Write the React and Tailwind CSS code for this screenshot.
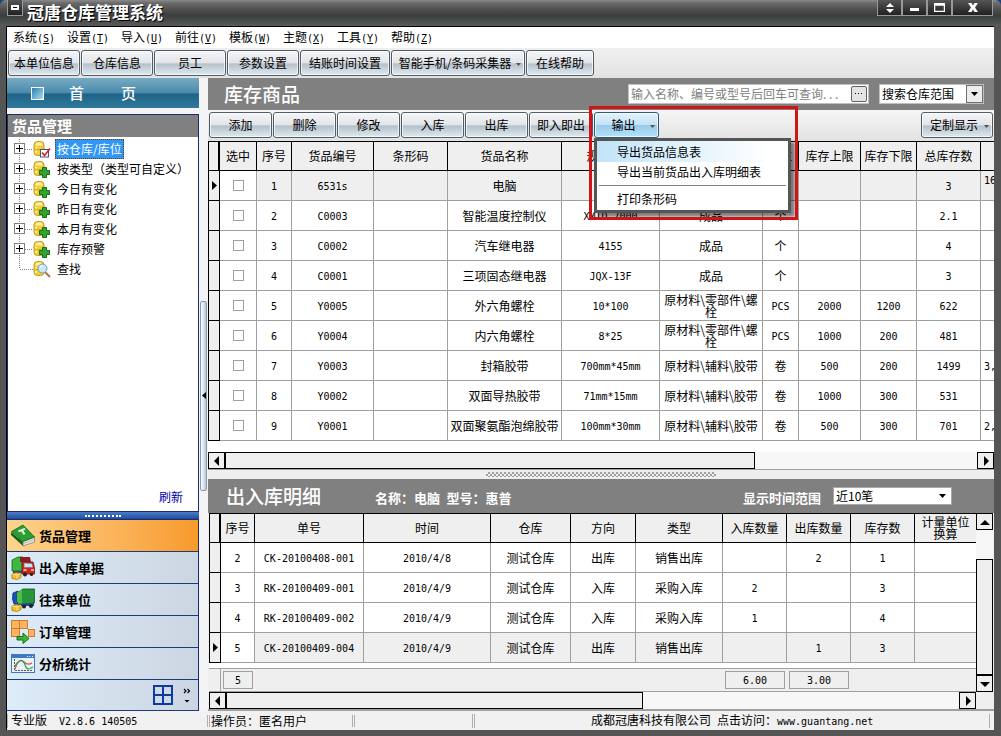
import React, { useState } from 'react';
import clsx from 'clsx';

const MENUS = [
  ['系统', 'S'], ['设置', 'T'], ['导入', 'U'], ['前往', 'V'],
  ['模板', 'W'], ['主题', 'X'], ['工具', 'Y'], ['帮助', 'Z'],
];

const TOOLS = [
  { label: '本单位信息', width: 'w-[72px]' },
  { label: '仓库信息', width: 'w-[72px]' },
  { label: '员工', width: 'w-[72px]' },
  { label: '参数设置', width: 'w-[72px]' },
  { label: '结账时间设置', width: 'w-[90px]' },
  { label: '智能手机/条码采集器', width: 'w-[134px]', caret: true },
  { label: '在线帮助', width: 'w-[68px]' },
];

const TREE = [
  { label: '按仓库/库位', badge: 'check', selected: true },
  { label: '按类型（类型可自定义）', badge: 'plus' },
  { label: '今日有变化', badge: 'plus' },
  { label: '昨日有变化', badge: 'plus' },
  { label: '本月有变化', badge: 'plus' },
  { label: '库存预警', badge: 'plus' },
  { label: '查找', badge: 'search', leaf: true },
];

const GOODS_COLS = [12, 37, 35, 82, 74, 114, 98, 103, 36, 62, 56, 64, 60];
const GOODS_HEAD = ['选中', '序号', '货品编号', '条形码', '货品名称', '规格型号', '类别', '单位', '库存上限', '库存下限', '总库存数', ''];
const GOODS = [
  ['6531s', '', '电脑', '惠普', '成品', '台', '', '', '3', '16'],
  ['C0003', '', '智能温度控制仪', 'XMTD-7000', '成品', '个', '', '', '2.1', ''],
  ['C0002', '', '汽车继电器', '4155', '成品', '个', '', '', '4', ''],
  ['C0001', '', '三项固态继电器', 'JQX-13F', '成品', '个', '', '', '3', ''],
  ['Y0005', '', '外六角螺栓', '10*100', '原材料\\零部件\\螺栓', 'PCS', '2000', '1200', '622', ''],
  ['Y0004', '', '内六角螺栓', '8*25', '原材料\\零部件\\螺栓', 'PCS', '1000', '200', '481', ''],
  ['Y0003', '', '封箱胶带', '700mm*45mm', '原材料\\辅料\\胶带', '卷', '500', '200', '1499', '3,'],
  ['Y0002', '', '双面导热胶带', '71mm*15mm', '原材料\\辅料\\胶带', '卷', '1000', '300', '531', ''],
  ['Y0001', '', '双面聚氨酯泡绵胶带', '100mm*30mm', '原材料\\辅料\\胶带', '卷', '500', '300', '701', '2,'],
];

const LOG_COLS = [12, 34, 109, 127, 80, 65, 87, 64, 64, 64, 62];
const LOG_HEAD = ['序号', '单号', '时间', '仓库', '方向', '类型', '入库数量', '出库数量', '库存数', '计量单位换算'];
const LOGS = [
  ['2', 'CK-20100408-001', '2010/4/8', '测试仓库', '出库', '销售出库', '', '2', '1', ''],
  ['3', 'RK-20100409-001', '2010/4/9', '测试仓库', '入库', '采购入库', '2', '', '3', ''],
  ['4', 'RK-20100409-002', '2010/4/9', '测试仓库', '入库', '采购入库', '1', '', '4', ''],
  ['5', 'CK-20100409-004', '2010/4/9', '测试仓库', '出库', '销售出库', '', '1', '3', ''],
];

function Latin({ children }) {
  return <span className="font-['DejaVu_Sans_Mono',monospace] text-[10px]">{children}</span>;
}

// plain ASCII values use the narrow monospaced face
function Value({ children }) {
  return /^[\x20-\x7e]+$/.test(children) ? <Latin>{children}</Latin> : children;
}

function Caret({ className }) {
  return (
    <svg viewBox="0 0 5 3" className={clsx('h-[3px] w-[5px] shrink-0', className)}>
      <path d="M0 0h5L2.5 3z" fill="currentColor" />
    </svg>
  );
}

function PushButton({ label, width, caret, active, onClick }) {
  return (
    <button
      onClick={onClick}
      className={clsx(
        'relative flex h-[26px] shrink-0 items-center justify-center rounded-[3px] border whitespace-nowrap shadow-[inset_0_0_0_1px_rgba(255,255,255,0.7)]',
        width,
        caret && 'pr-[6px]',
        active
          ? 'border-[#2c5a7c] bg-[linear-gradient(#e4f3fb_0%,#c4e2f4_48%,#98ccec_52%,#b4e2f8_100%)]'
          : 'border-[#505c66] bg-[linear-gradient(#f4f5f7_0%,#e2e5e9_48%,#b6c0ca_54%,#dfeaf0_100%)]'
      )}
    >
      {label}
      {caret && <Caret className="absolute right-[3px] top-[12px] text-[#555]" />}
    </button>
  );
}

function Arrow({ dir, className }) {
  const d = {
    left: 'M8 1v10L3 6z',
    right: 'M4 1v10l5-5z',
    up: 'M1 9h10L6 4z',
    down: 'M1 4h10L6 9z',
  }[dir];
  return (
    <button aria-label={dir} className={clsx('flex size-[17px] shrink-0 items-center justify-center border border-black bg-[#efefef]', className)}>
      <svg viewBox="0 0 12 12" className="size-3"><path d={d} /></svg>
    </button>
  );
}

function Expander({ leaf }) {
  return (
    <svg width="25" height="20" viewBox="0 0 25 20" fill="none" shapeRendering="crispEdges">
      <path d={leaf ? 'M11.5 0v10H25' : 'M11.5 0v20M17 10.5h8'} stroke="#808080" strokeDasharray="1 1" />
      {!leaf && <rect x="6.5" y="4.5" width="10" height="10" fill="#fff" stroke="#808080" />}
      {!leaf && <path d="M8 9.5h7M11.5 6v7" stroke="#000" />}
    </svg>
  );
}

function StockIcon({ badge }) {
  return (
    <svg width="18" height="18" viewBox="0 0 18 18">
      <rect x="1" y="1.5" width="10" height="14" rx="3.5" fill="#f3ce36" stroke="#c79a18" />
      <path d="M2.5 4.5c0-3 7-3 7 0v1h-7z" fill="#fdf0a0" />
      <path d="M3 7v2M3 11v2" stroke="#fff3ac" strokeWidth="2" />
      <path d="M1.5 8.5c2 1.600 7 1.600 9 0" stroke="#c79a18" fill="none" strokeWidth=".8" />
      {badge === 'plus' && (
        <path d="M9.5 7.5h4v3h3v4h-3v3h-4v-3h-3v-4h3z" fill="#2fa52c" stroke="#137018" />
      )}
      {badge === 'check' && (
        <g>
          <rect x="7.5" y="9.5" width="8" height="7.5" fill="#fff" stroke="#46508c" />
          <path d="M9 12.5l2.5 3L17 8.500" fill="none" stroke="#d42020" strokeWidth="1.600" />
        </g>
      )}
      {badge === 'search' && (
        <g>
          <path d="M12 12l5 5" stroke="#b0704a" strokeWidth="2" />
          <circle cx="9.5" cy="8.5" r="4.5" fill="#c4e8fa" stroke="#7a9cb8" />
          <path d="M7 8a3 3 0 0 1 3-2.5" stroke="#fff" fill="none" />
        </g>
      )}
    </svg>
  );
}

function Boxes() {
  return (
    <g>
      <path d="M1 18l4-1.500 5 1v4L6 23.500l-5-1z" fill="#f5bd2c" stroke="#a87808" strokeWidth=".8" />
      <path d="M1 18l5 1 4-1.500M6 19v4" fill="none" stroke="#fbe696" strokeWidth=".9" />
    </g>
  );
}

const NAV_ICONS = {
  book: (
    <svg viewBox="0 0 24 24" className="size-6">
      <path d="M0 8v3l12 11v-4z" fill="#12601c" />
      <path d="M12 17.500L23.500 13v5L12 22z" fill="#e8e8e0" stroke="#777" strokeWidth=".7" />
      <path d="M12.500 19.500l10.500-4" stroke="#999" strokeWidth=".6" />
      <path d="M.5 7.500L12 1l11.500 12L12 17.500z" fill="#28a034" stroke="#0e6a1a" strokeWidth=".8" />
      <path d="M7 6.500L13.500 4l1 1.500-2.300.9 2.300 3.600-2 .8-2.300-3.600-2.300 1z" fill="#eefbe8" />
    </svg>
  ),
  truckIn: (
    <svg viewBox="0 0 24 24" className="size-6">
      <path d="M1 4l6-3h5v14H1z" fill="#3cb83c" stroke="#156418" strokeWidth=".8" />
      <path d="M9 1h10l1 5H9z" fill="#8a2020" />
      <path d="M11 5.500l11 .5 1.500 6v6H11z" fill="#d22424" stroke="#701010" strokeWidth=".8" />
      <path d="M13 7l8 .4 1 4h-9z" fill="#cfe6f6" stroke="#5a6a88" strokeWidth=".6" />
      <path d="M12.500 14h3M20 14h3" stroke="#ffe278" strokeWidth="1.400" />
      <circle cx="14" cy="18.500" r="2" fill="#222" />
      <circle cx="20.500" cy="18.500" r="1.600" fill="#222" />
      <path d="M2 15h9v3H2z" fill="#244a9c" />
      <Boxes />
    </svg>
  ),
  truckOut: (
    <svg viewBox="0 0 24 24" className="size-6">
      <path d="M2 5l5-2v14l-4-1-1.500-5z" fill="#1c50b4" stroke="#0c2c70" strokeWidth=".8" />
      <path d="M6 5l6-4h11.500v14L10 16l-4-2z" fill="#27953a" stroke="#0f5c20" strokeWidth=".8" />
      <path d="M6 5l5-3.500v14L10 16l-4-2z" fill="#4ac04c" />
      <path d="M6 16l17-1v3H6z" fill="#234aa0" />
      <circle cx="13" cy="18.500" r="2" fill="#222" />
      <circle cx="20" cy="18" r="2" fill="#222" />
      <Boxes />
    </svg>
  ),
  order: (
    <svg viewBox="0 0 24 24" className="size-6">
      <g fill="#fbb464" stroke="#d07c28">
        <rect x=".5" y=".5" width="8" height="8" />
        <rect x="8.500" y=".5" width="8" height="8" />
        <rect x=".5" y="8.500" width="8" height="8" />
        <rect x="17.500" y="9.500" width="6" height="7" />
      </g>
      <path d="M6 16.500h6v-3.500l6 5.500-6 5V20H6z" fill="#3cb43c" stroke="#14701c" />
    </svg>
  ),
  chart: (
    <svg viewBox="0 0 24 24" className="size-6">
      <rect x=".5" y="2.500" width="23" height="18" fill="#e6f2fc" stroke="#4878b4" />
      <path d="M1 3h22v3H1z" fill="#3c78c8" />
      <path d="M16 4.500h1M18.500 4.500h1M21 4.500h1" stroke="#fff" />
      <path d="M3.500 7v11.500H22" stroke="#555" fill="none" strokeDasharray="2 1" />
      <path d="M4 17c3-9 6-10 9-7s5 3 8 1" stroke="#e05038" fill="none" strokeWidth="1.200" />
      <path d="M4 14c4-7 8-7 10-1s4 4 8 2" stroke="#38a048" fill="none" strokeWidth="1.200" />
    </svg>
  ),
};

const NAV = [
  { label: '货品管理', icon: 'book', active: true },
  { label: '出入库单据', icon: 'truckIn' },
  { label: '往来单位', icon: 'truckOut' },
  { label: '订单管理', icon: 'order' },
  { label: '分析统计', icon: 'chart' },
];

function TitleBar() {
  const cell = 'flex h-4 items-center justify-center border border-t-0 border-[#999] bg-gradient-to-b from-[#555] to-[#222]';
  return (
    <header className="flex h-[26px] items-start rounded-t-md bg-[linear-gradient(#8a8a8a_0%,#6a6a6a_12%,#4c4c4c_40%,#3a3e3e_60%,#5a5a5a_100%)] pr-2 pl-[7px]">
      <button aria-label="系统菜单" className={clsx(cell, 'w-4')}>
        <svg width="8" height="5"><path d="M0 0h8v5H0z" fill="#fff" /><path d="M2 2h4v1H2z" /></svg>
      </button>
      <h1 className="flex-1 pl-1 text-[17px] leading-6 font-bold text-white [text-shadow:1px_1px_0_#000]">冠唐仓库管理系统</h1>
      <button aria-label="折叠" className={clsx(cell, 'w-[25px]')}>
        <svg width="8" height="10"><path d="M4 0l4 4H0zM4 10l4-4H0z" fill="#fff" /></svg>
      </button>
      <button aria-label="最小化" className={clsx(cell, 'w-[25px]')}>
        <svg width="9" height="9"><path d="M0 5h9v3H0z" fill="#fff" /></svg>
      </button>
      <button aria-label="最大化" className={clsx(cell, 'w-[25px]')}>
        <svg width="11" height="9"><path d="M.5.5h10v8H.5zM0 2h11" fill="none" stroke="#fff" strokeWidth="1.500" /></svg>
      </button>
      <button aria-label="关闭" className={clsx(cell, 'w-[41px]')}>
        <svg width="10" height="9"><path d="M0 0h3.500L5 2.500 6.500 0H10L7 4.500 10 9H6.500L5 6.500 3.500 9H0l3-4.500z" fill="#fff" /></svg>
      </button>
    </header>
  );
}

function Sidebar() {
  return (
    <aside className="flex w-48 shrink-0 flex-col">
      <button className="flex h-[30px] items-center bg-[linear-gradient(#78aac4_0%,#4c8cac_48%,#1f6488_54%,#2f7a9c_100%)] pl-6 text-[15px] font-medium text-white">
        <span className="size-[13px] border border-white bg-gradient-to-br from-[#2a80b0] to-[#a8dcf0]" />
        <span className="pl-[25px]">首</span>
        <span className="pl-[37px]">页</span>
      </button>
      <section className="mt-[6px] flex flex-1 flex-col border border-[#1c2c70] bg-white">
        <h2 className="h-[22px] bg-[#808080] pl-1 text-[15px] leading-[22px] font-bold text-white">货品管理</h2>
        <ul className="flex-1 pt-[2px]">
          {TREE.map((node) => (
            <li key={node.label} className="flex h-5 items-center">
              {node.leaf ? <Expander leaf /> : <button aria-label={'展开' + node.label}><Expander /></button>}
              <StockIcon badge={node.badge} />
              <a
                href="#"
                className={clsx(
                  'ml-1 px-[2px] leading-5 whitespace-nowrap',
                  node.selected && 'bg-[#3296f5] text-white outline-1 -outline-offset-1 outline-dotted outline-[#604010]'
                )}
              >
                {node.label}
              </a>
            </li>
          ))}
        </ul>
        <a href="#" className="self-end pr-[15px] pb-1 leading-5 text-[#0000a8]">刷新</a>
      </section>
      <div className="flex h-[7px] items-center justify-center bg-gradient-to-b from-[#4c7cc8] to-[#1c4c9c]">
        <span className="w-9 border-t-2 border-dotted border-white" />
      </div>
      <nav className="border-t border-r border-[#1c2c70]">
        {NAV.map((item) => (
          <a
            key={item.label}
            href="#"
            className={clsx(
              'flex h-8 items-center gap-1 border-b border-[#1c3a80] pl-1 text-[13px] font-bold',
              item.active ? 'bg-gradient-to-r from-[#fdd48c] to-[#f79a28]' : 'bg-gradient-to-r from-[#dcecf8] to-[#ccd6e2]'
            )}
          >
            {NAV_ICONS[item.icon]}
            {item.label}
          </a>
        ))}
        <div className="flex h-[31px] items-center justify-end gap-[10px] border-b border-[#1c3a80] bg-gradient-to-r from-[#dcecf8] to-[#ccd6e2] pr-[7px]">
          <svg width="20" height="20" viewBox="0 0 20 20" fill="none" stroke="#0c3ca0" strokeWidth="2">
            <path d="M1 1h18v18H1zM10 1v18M1 10h18" />
          </svg>
          <svg width="8" height="15" viewBox="0 0 8 15" fill="none" stroke="#000">
            <path d="M1 1l2 2-2 2M4.500 1l2 2-2 2" strokeWidth="1.200" />
            <path d="M1.500 12h5L4 14.500z" fill="#000" stroke="none" />
          </svg>
        </div>
      </nav>
    </aside>
  );
}

function Grid({ cols, head, children }) {
  const total = cols.reduce((a, b) => a + b, 0);
  return (
    <table className="table-fixed border-separate border-spacing-0 text-center leading-3" style={{ width: total }}>
      <colgroup>
        {cols.map((w, i) => <col key={i} style={{ width: w }} />)}
      </colgroup>
      <thead>
        <tr className="h-[30px] bg-[#efefef]">
          <th className="border border-r-2 border-black p-0" />
          {head.map((h, i) => (
            <th key={i} className={clsx('border-y border-r border-black py-0 font-normal', h.length > 4 ? 'px-1' : 'px-0')}>{h}</th>
          ))}
        </tr>
      </thead>
      <tbody>{children}</tbody>
    </table>
  );
}

function Marker({ on }) {
  return (
    <td className="border-x border-b border-black bg-[#efefef] p-0">
      {on && <svg width="5" height="9" className="ml-[3px]"><path d="M0 0v9l5-4.500z" /></svg>}
    </td>
  );
}

function ExportMenu() {
  const [open, setOpen] = useState(true);
  return (
    <div className="relative">
      <PushButton label="输出" width="w-[65px]" caret active onClick={() => setOpen(!open)} />
      {open && (
        <div className="absolute top-[26px] left-0 z-10 w-[197px] border-[3px] border-[#555] bg-white pb-px shadow-[4px_4px_3px_rgba(0,0,0,0.5)]">
          <button className="block h-[21px] w-full bg-gradient-to-r from-[#c0e4f8] to-white to-90% pl-5 text-left">导出货品信息表</button>
          <button className="block h-5 w-full pl-5 text-left">导出当前货品出入库明细表</button>
          <hr className="mx-[2px] my-[3px] border-[#808080]" />
          <button className="block h-5 w-full pl-5 text-left">打印条形码</button>
        </div>
      )}
      <div className="pointer-events-none absolute -top-[6px] -left-[5px] z-20 h-[114px] w-[209px] border-[3px] border-[#d01418]" />
    </div>
  );
}

function GoodsPanel() {
  return (
    <section className="flex flex-1 flex-col">
      <div className="flex h-8 items-center bg-[#808080] pr-[10px]">
        <h2 className="flex-1 pl-4 text-[19px] font-medium text-white">库存商品</h2>
        <div className="flex h-5 w-[241px] items-center border border-[#c0c0c0] bg-white pr-px">
          <input
            aria-label="查询货品"
            placeholder="输入名称、编号或型号后回车可查询. . ."
            className="min-w-0 flex-1 pl-[2px] outline-none placeholder:text-[#808080]"
          />
          <button aria-label="更多" className="flex size-4 items-center justify-center rounded-[2px] border border-[#606060] bg-[#e4e4e4]">
            <svg width="8" height="2"><path d="M0 0h1v1H0zM3 0h1v1H3zM6 0h1v1H6z" /></svg>
          </button>
        </div>
        <div className="relative ml-[10px] h-5 w-[105px] border border-[#c0c0c0] bg-white">
          <select aria-label="搜索仓库范围" className="h-full w-full appearance-none pl-[2px] outline-none">
            <option>搜索仓库范围</option>
          </select>
          <span className="pointer-events-none absolute inset-y-0 right-0 flex w-[17px] items-center justify-center border border-[#707070] bg-[#ececec]">
            <svg width="7" height="4"><path d="M0 0h7L3.500 4z" /></svg>
          </span>
        </div>
      </div>

      <div className="flex h-[31px] gap-px bg-gradient-to-b from-[#f6f6f6] to-[#e2e2e2] pt-[2px] pr-px pl-px">
        {['添加', '删除', '修改', '入库', '出库'].map((label) => (
          <PushButton key={label} label={label} width="w-[63px]" />
        ))}
        <PushButton label="即入即出" width="w-16" />
        <ExportMenu />
        <div className="flex-1" />
        <PushButton label="定制显示" width="w-[72px]" caret />
      </div>

      <div className="flex-1 overflow-hidden bg-white pb-[11px]">
        <Grid cols={GOODS_COLS} head={GOODS_HEAD}>
          {GOODS.map((row, i) => (
            <tr key={row[0]} className={clsx('h-[30px]', i === 0 && 'bg-[#efefef]')}>
              <Marker on={i === 0} />
              <td className="border-r border-b border-[#a0a0a0] bg-white p-0">
                <input
                  type="checkbox"
                  aria-label={'选中 ' + row[0]}
                  className="mx-auto block size-[11px] appearance-none border border-[#a0a0a0] bg-white checked:bg-[#808080]"
                />
              </td>
              <td className="border-r border-b border-[#a0a0a0] p-0"><Latin>{i + 1}</Latin></td>
              {row.map((v, j) => (
                <td
                  key={j}
                  className={clsx('border-r border-b border-[#a0a0a0]', j === 9 ? 'pl-[3px] text-left' : 'p-0', j === 9 && i === 0 && 'pb-3')}
                >
                  <Value>{v}</Value>
                </td>
              ))}
            </tr>
          ))}
        </Grid>
      </div>

      <div className="flex h-[18px] border-b border-[#a0a0a0] bg-[#f7f7f7]">
        <Arrow dir="left" />
        <div className="w-[530px] border border-black bg-[#efefef]" />
        <div className="flex-1" />
        <Arrow dir="right" />
      </div>
    </section>
  );
}

function LogPanel() {
  return (
    <section>
      <div className="flex h-[34px] items-center bg-[#808080] pr-[42px] text-[13px] font-bold text-white">
        <h2 className="w-[167px] pl-[18px] text-[19px] font-medium">出入库明细</h2>
        <p className="flex-1 pt-1">名称：电脑&ensp;型号：惠普</p>
        <label htmlFor="range" className="pt-1">显示时间范围</label>
        <div className="relative ml-3 h-[18px] w-[119px] border border-[#a8a8a8] bg-white text-xs font-normal text-black">
          <select id="range" className="block h-full w-full appearance-none pl-[2px] leading-4 outline-none">
            <option>近10笔</option>
          </select>
          <svg width="7" height="4" className="pointer-events-none absolute top-[6px] right-[5px]"><path d="M0 0h7L3.500 4z" /></svg>
        </div>
      </div>

      <div className="flex border-b-2 border-[#a0a0a0] bg-[#efefef] pl-px">
        <div className="flex min-w-0 flex-1 flex-col">
          <div className="overflow-hidden bg-white pb-[5px]">
            <Grid cols={LOG_COLS} head={LOG_HEAD}>
              {LOGS.map((row, i) => (
                <tr key={row[0]} className={clsx('h-[30px]', i === 3 && 'bg-[#efefef]')}>
                  <Marker on={i === 3} />
                  {row.map((v, j) => (
                    <td key={j} className={clsx('border-r border-b border-[#a0a0a0] p-0', j === 0 && 'bg-white')}>
                      <Value>{v}</Value>
                    </td>
                  ))}
                </tr>
              ))}
            </Grid>
          </div>
          <div className="flex h-6 items-center border-y border-[#a0a0a0] text-center leading-[14px]">
            <div className="h-full w-3 border-r border-[#a0a0a0]" />
            <div className="ml-[2px] h-[18px] w-[30px] border border-[#a0a0a0]"><Latin>5</Latin></div>
            <div className="ml-[472px] h-[18px] w-[60px] border border-[#a0a0a0]"><Latin>6.00</Latin></div>
            <div className="ml-1 h-[18px] w-[60px] border border-[#a0a0a0]"><Latin>3.00</Latin></div>
          </div>
          <div className="flex h-[17px] bg-[#f7f7f7]">
            <Arrow dir="left" />
            <div className="w-[417px] border border-black bg-[#efefef]" />
            <div className="flex-1" />
            <Arrow dir="right" />
          </div>
        </div>
        <div className="mr-px mb-[17px] flex w-[17px] flex-col bg-[#f7f7f7]">
          <Arrow dir="up" />
          <div className="h-[29px]" />
          <div className="flex-1 border border-black bg-[#efefef]" />
          <Arrow dir="down" />
        </div>
      </div>
    </section>
  );
}

export default function App() {
  return (
    <div className="bg-[#16408c]">
      <div className="flex min-h-screen flex-col rounded-t-md bg-[#555] font-['Noto_Sans_CJK_SC',sans-serif] text-xs text-black">
        <TitleBar />
        <div className="mr-[7px] mb-[6px] ml-[6px] flex flex-1 flex-col border-t border-l border-black bg-[#f4f4f6]">
          <nav className="flex h-[21px] items-center gap-3 bg-white pl-[6px]">
            {MENUS.map(([label, key]) => (
              <button key={key} className="w-[42px] text-left whitespace-nowrap">
                {label}<Latin>(<u>{key}</u>)</Latin>
              </button>
            ))}
          </nav>
          <div className="flex h-[30px] gap-px bg-gradient-to-b from-[#f0f0f0] to-[#e2e2e2] pt-[2px] pl-px">
            {TOOLS.map((tool) => <PushButton key={tool.label} {...tool} />)}
          </div>

          <div className="flex flex-1">
            <Sidebar />
            <button aria-label="收起侧栏" className="flex w-[9px] shrink-0 items-center justify-center pt-[2px]">
              <span className="flex h-[190px] w-[7px] items-center justify-center rounded-[2px] border border-[#8898a8] bg-gradient-to-r from-white to-[#b4c8d4]">
                <svg width="4" height="7"><path d="M4 0v7L0 3.500z" /></svg>
              </span>
            </button>
            <main className="flex min-w-0 flex-1 flex-col">
              <GoodsPanel />
              <div className="flex h-[9px] items-center justify-center bg-[#efefef]">
                <div className="h-[5px] w-[230px] bg-[conic-gradient(#a0a0a0_25%,transparent_0_50%,#a0a0a0_0_75%,transparent_0)] bg-[length:4px_4px]" />
              </div>
              <LogPanel />
            </main>
          </div>

          <footer className="flex h-[19px] items-center bg-[#f1f1f1] pr-1 whitespace-nowrap">
            <p className="w-[200px] border-l border-[#b0b0b0] pl-[3px] leading-3">
              专业版<span className="pl-3"><Latin>V2.8.6 140505</Latin></span>
            </p>
            <p className="w-[145px] border-l-3 border-double border-[#b0b0b0] pl-px leading-3">操作员：匿名用户</p>
            <p className="h-3 w-[120px] border-l-3 border-double border-[#b0b0b0]" />
            <p className="flex-1 border-r border-l-3 border-double border-[#b0b0b0] pl-[116px] leading-3">
              成都冠唐科技有限公司&ensp;点击访问：<a href="#"><Latin>www.guantang.net</Latin></a>
            </p>
          </footer>
        </div>
      </div>
    </div>
  );
}
